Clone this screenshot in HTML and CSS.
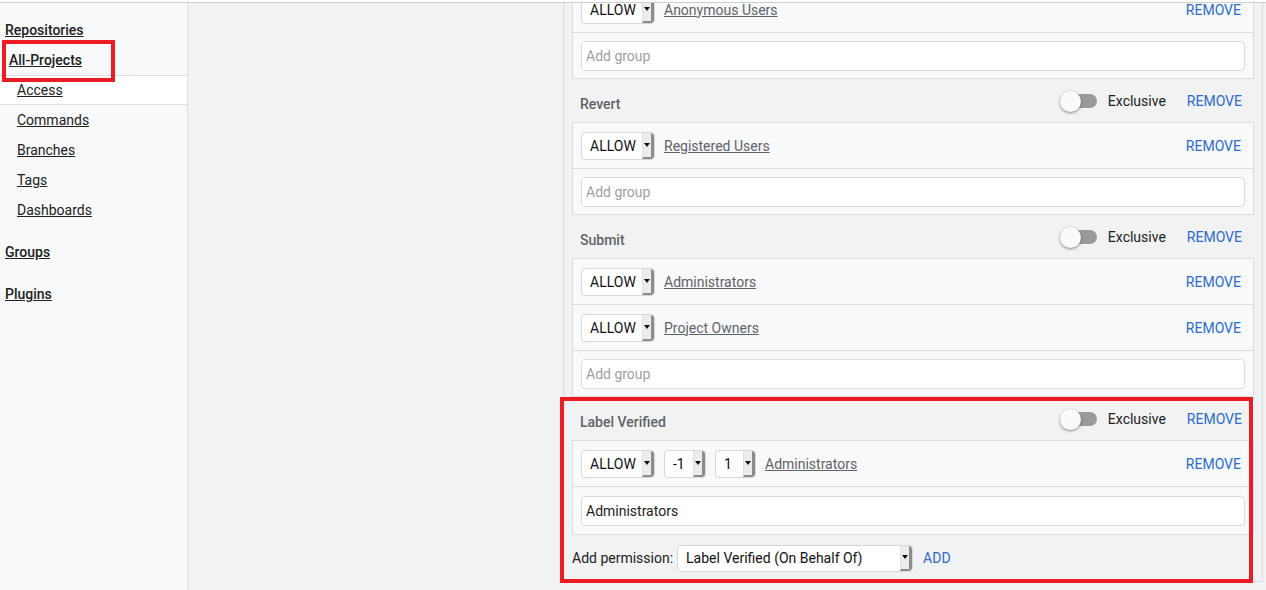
FILE: index.html
```html
<!DOCTYPE html>
<html>
<head>
<meta charset="utf-8">
<link rel="stylesheet" href="styles.css">
</head>
<body>
<div class="topline"></div>
<div class="page">
  <nav class="sidebar">
    <ul class="nav">
      <li class="top mt"><a href="#">Repositories</a></li>
      <li class="top annotated"><a href="#">All-Projects</a><span class="mark mark-nav"></span></li>
      <li class="sub selected"><a href="#">Access</a></li>
      <li class="sub"><a href="#">Commands</a></li>
      <li class="sub"><a href="#">Branches</a></li>
      <li class="sub"><a href="#">Tags</a></li>
      <li class="sub"><a href="#">Dashboards</a></li>
      <li class="top mt"><a href="#">Groups</a></li>
      <li class="top mt"><a href="#">Plugins</a></li>
    </ul>
  </nav>
  <main class="main">
    <section class="ref">
      <div class="perm">
        <div class="rules">
          <div class="rule">
            <div class="sel w-allow"><span class="sel-val">ALLOW</span><span class="sel-btn"><i class="tri"></i></span></div>
            <a class="group" href="#">Anonymous Users</a>
            <span class="spacer"></span>
            <a class="action" href="#">REMOVE</a>
          </div>
          <div class="rule"><input class="add-group" placeholder="Add group"></div>
        </div>
      </div>

      <div class="perm">
        <div class="perm-header">
          <span class="perm-title">Revert</span>
          <span class="toggle"><span class="knob"></span></span>
          <span class="excl">Exclusive</span>
          <a class="action" href="#">REMOVE</a>
        </div>
        <div class="rules">
          <div class="rule">
            <div class="sel w-allow"><span class="sel-val">ALLOW</span><span class="sel-btn"><i class="tri"></i></span></div>
            <a class="group" href="#">Registered Users</a>
            <span class="spacer"></span>
            <a class="action" href="#">REMOVE</a>
          </div>
          <div class="rule"><input class="add-group" placeholder="Add group"></div>
        </div>
      </div>

      <div class="perm">
        <div class="perm-header">
          <span class="perm-title">Submit</span>
          <span class="toggle"><span class="knob"></span></span>
          <span class="excl">Exclusive</span>
          <a class="action" href="#">REMOVE</a>
        </div>
        <div class="rules">
          <div class="rule">
            <div class="sel w-allow"><span class="sel-val">ALLOW</span><span class="sel-btn"><i class="tri"></i></span></div>
            <a class="group" href="#">Administrators</a>
            <span class="spacer"></span>
            <a class="action" href="#">REMOVE</a>
          </div>
          <div class="rule">
            <div class="sel w-allow"><span class="sel-val">ALLOW</span><span class="sel-btn"><i class="tri"></i></span></div>
            <a class="group" href="#">Project Owners</a>
            <span class="spacer"></span>
            <a class="action" href="#">REMOVE</a>
          </div>
          <div class="rule"><input class="add-group" placeholder="Add group"></div>
        </div>
      </div>

      <div class="highlighted">
        <div class="perm">
          <div class="perm-header">
            <span class="perm-title">Label Verified</span>
            <span class="toggle"><span class="knob"></span></span>
            <span class="excl">Exclusive</span>
            <a class="action" href="#">REMOVE</a>
          </div>
          <div class="rules">
            <div class="rule">
              <div class="sel w-allow"><span class="sel-val">ALLOW</span><span class="sel-btn"><i class="tri"></i></span></div>
              <div class="sel w-m1"><span class="sel-val">-1</span><span class="sel-btn"><i class="tri"></i></span></div>
              <div class="sel w-p1"><span class="sel-val">1</span><span class="sel-btn"><i class="tri"></i></span></div>
              <a class="group" href="#">Administrators</a>
              <span class="spacer"></span>
              <a class="action" href="#">REMOVE</a>
            </div>
            <div class="rule input-row"><input class="add-group" value="Administrators"></div>
          </div>
        </div>
        <div class="add-perm">
          <span class="add-label">Add permission:</span>
          <div class="sel w-perm"><span class="sel-val">Label Verified (On Behalf Of)</span><span class="sel-btn"><i class="tri"></i></span></div>
          <a class="action add" href="#">ADD</a>
        </div>
        <span class="mark mark-section"></span>
      </div>
    </section>
  </main>
</div>
</body>
</html>
```
FILE: styles.css
```css
html, body {
  margin: 0;
  padding: 0;
}
body {
  font-family: Roboto, "Noto Sans", "Liberation Sans", sans-serif;
  font-size: 14px;
  color: #212121;
  background: #f1f2f3;
  overflow: hidden;
}
a { color: inherit; }

.topline {
  height: 2px;
  background: #ffffff;
  border-bottom: 1px solid #cfcfcf;
}
.page {
  display: flex;
  height: 587px;
  overflow: hidden;
}

/* Sidebar */
.sidebar {
  width: 187px;
  flex: none;
  background: #f8f9fa;
  border-right: 1px solid #dedfe1;
}
.nav {
  list-style: none;
  margin: 0;
  padding: 0;
}
.nav li {
  height: 30px;
  box-sizing: border-box;
  display: flex;
  align-items: center;
}
.nav a {
  color: #212121;
  text-decoration: underline;
}
.nav .top {
  padding-left: 5px;
  font-weight: 500;
}
.nav .mt { margin-top: 12px; }
.nav .annotated { padding-left: 9px; }
.nav .sub { padding-left: 17px; }
.nav .selected {
  background: #ffffff;
  border-top: 1px solid #dedfe1;
  border-bottom: 1px solid #dedfe1;
}
.annotated { position: relative; }

/* annotation marks */
.mark {
  position: absolute;
  border: 4px solid #ec1c24;
  box-sizing: border-box;
  pointer-events: none;
}
.mark-nav {
  left: 2px;
  top: -5px;
  width: 113px;
  height: 42px;
}

/* Main */
.main {
  flex: 1;
  padding: 0 3px 0 375px;
  min-width: 0;
}
.ref {
  margin-top: -17px;
  border-left: 1px solid #dadcdf;
  border-right: 1px solid #dadcdf;
  border-bottom: 1px solid #dadcdf;
  padding: 0 8px;
}
.perm-header {
  height: 43px;
  box-sizing: border-box;
  padding: 1px 12px 0 8px;
  display: flex;
  align-items: center;
}
.perm-title {
  flex: 1;
  font-weight: 500;
  color: #5f6368;
  padding-top: 6px;
}
.toggle {
  width: 36px;
  height: 14px;
  border-radius: 7px;
  background: #9a9a9a;
  display: flex;
  align-items: center;
  flex: none;
}
.knob {
  width: 21px;
  height: 21px;
  border-radius: 50%;
  background: #fafafa;
  box-shadow: 0 1px 3px rgba(0,0,0,0.45);
  margin-left: -1px;
}
.excl {
  margin-left: 11px;
  color: #212121;
}
.action {
  color: #2c6bd0;
  text-decoration: none;
  text-transform: uppercase;
}
.perm-header .action { margin-left: 21px; }

.rules {
  border: 1px solid #dadcdf;
  background: #f8f9fa;
}
.rule {
  height: 45px;
  box-sizing: content-box;
  display: flex;
  align-items: center;
  gap: 9px;
  padding: 0 12px 0 8px;
  border-bottom: 1px solid #dadcdf;
}
.rule:last-child {
  border-bottom: none;
  padding-right: 8px;
}
.rule.input-row { height: 47px; }
.spacer { flex: 1; }
.group {
  color: #5f6368;
  text-decoration: underline;
}

/* select look-alike */
.sel {
  display: inline-flex;
  height: 28px;
  box-sizing: border-box;
  border: 1px solid #d7d7d7;
  border-radius: 4px;
  background: #ffffff;
  overflow: hidden;
  flex: none;
  color: #111;
}
.sel-val {
  flex: 1;
  display: flex;
  align-items: center;
  padding-left: 8px;
  white-space: nowrap;
}
.sel-btn {
  width: 12px;
  box-sizing: border-box;
  background: #ececec;
  border-left: 1px solid #e0e0e0;
  border-right: 3px solid #8c8c8c;
  border-bottom: 2px solid #8c8c8c;
  border-radius: 0 3px 3px 0;
  display: flex;
  align-items: center;
  justify-content: center;
}
.tri {
  width: 0;
  height: 0;
  border-left: 3px solid transparent;
  border-right: 3px solid transparent;
  border-top: 4px solid #111;
}
.w-allow { width: 74px; }
.w-m1 { width: 42px; }
.w-p1 { width: 41px; }
.w-perm { width: 236px; height: 27px; }

.add-group {
  flex: 1;
  height: 30px;
  box-sizing: border-box;
  border: 1px solid #dadcdf;
  border-radius: 4px;
  background: #ffffff;
  padding: 0 4px;
  font: inherit;
  color: #212121;
  outline: none;
  margin-top: 1px;
}
.add-group::placeholder { color: #a0a0a0; }

.highlighted { position: relative; }
.mark-section {
  left: -12px;
  right: 1px;
  top: 0;
  bottom: -2px;
}
.add-perm {
  height: 46px;
  display: flex;
  align-items: center;
}
.add-label { margin-right: 4px; }
.add-perm .add { margin-left: 10px; }
```
